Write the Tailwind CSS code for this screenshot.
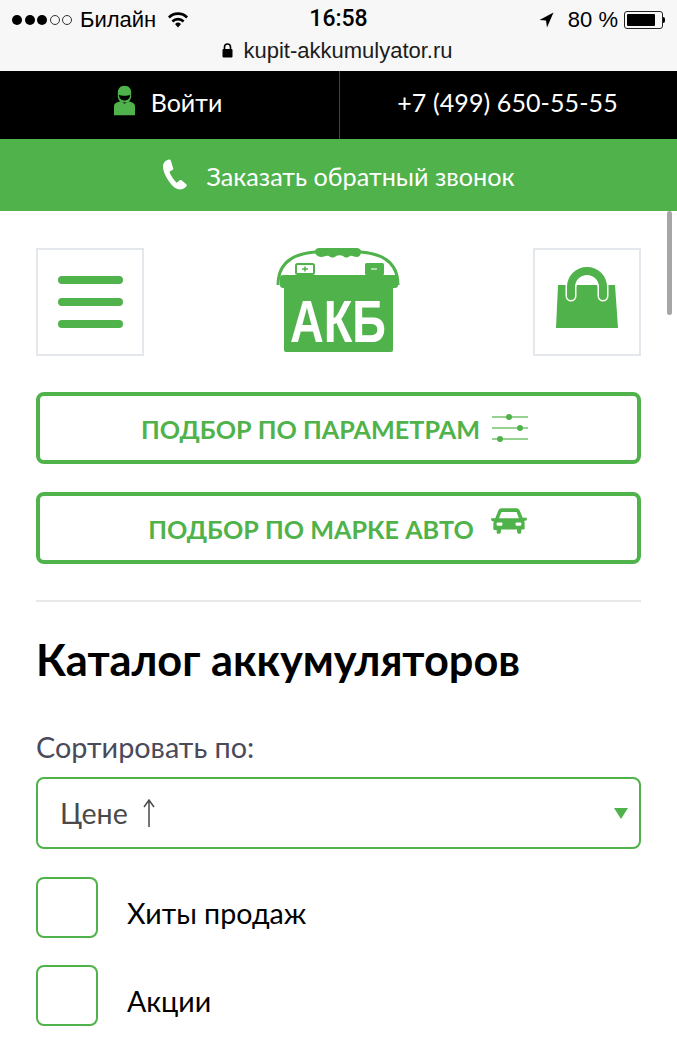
<!DOCTYPE html>
<html lang="ru">
<head>
    <meta charset="UTF-8">
    <meta name="viewport" content="width=device-width, initial-scale=1.0">
    <title>Каталог аккумуляторов</title>
    <script src="https://cdn.jsdelivr.net/npm/@tailwindcss/browser@4"></script>
</head>
<body class="relative h-[1060px] overflow-hidden bg-white font-['Lato','Noto_Sans',sans-serif]">

    <!-- статус-бар телефона -->
    <div class="h-[71px] bg-[#f7f7f7] font-['Liberation_Sans',sans-serif] text-black">
        <div class="grid h-[37px] grid-cols-3 items-center px-[12px] pt-[2px]">
            <div class="flex items-center">
                <div class="flex gap-[2.5px]">
                    <span class="size-[10px] rounded-full bg-black"></span>
                    <span class="size-[10px] rounded-full bg-black"></span>
                    <span class="size-[10px] rounded-full bg-black"></span>
                    <span class="size-[10px] rounded-full border border-[#333]"></span>
                    <span class="size-[10px] rounded-full border border-[#333]"></span>
                </div>
                <span class="ml-[8px] text-[22px]">Билайн</span>
                <svg class="ml-[11px]" width="22" height="17" viewBox="0 0 22 17"><path d="M1 5.500a14 14 0 0 1 20 0l-1.800 2a11.500 11.500 0 0 0-16.400 0zM4.500 9.500a9 9 0 0 1 13 0l-1.800 2a6.500 6.500 0 0 0-9.400 0zM8 13a4.300 4.300 0 0 1 6 0l-3 3.500z" fill="#000"/></svg>
            </div>
            <div class="text-center font-['Roboto',sans-serif] text-[23px] font-medium">16:58</div>
            <div class="flex items-center justify-end">
                <svg width="15" height="16" viewBox="0 0 15 16"><path d="M14.500 .5L.5 8l6.500.5L8 15.500z" fill="#000"/></svg>
                <span class="ml-[14px] text-[22px]">80 %</span>
                <div class="ml-[6px] flex items-center">
                    <div class="h-[18px] w-[39px] rounded-[3px] border border-[#222] p-[2px] pr-[7px]"><div class="h-full rounded-[1px] bg-black"></div></div>
                    <div class="h-[6px] w-[2px] rounded-r bg-black"></div>
                </div>
            </div>
        </div>
        <div class="flex h-[27px] items-center justify-center pr-[2px]">
            <svg class="mr-[10px]" width="11" height="15" viewBox="0 0 11 15"><path d="M2.500 6V4a3 3 0 0 1 6 0v2" fill="none" stroke="#000" stroke-width="1.600"/><rect x="0.500" y="6" width="10" height="8.500" rx="1" fill="#000"/></svg>
            <span class="text-[22px] text-[#1c1c1c]">kupit-akkumulyator.ru</span>
        </div>
    </div>

    <!-- вход и телефон -->
    <div class="flex h-[68px] bg-black text-[25px] text-white">
        <a class="flex w-[340px] items-center justify-center border-r border-[#444] pb-[4px] pr-[3px]">
            <svg class="mb-[5px] mr-[16px]" width="21" height="31" viewBox="0 0 22 31"><path d="M11 0c4.500 0 7 3 7 7v4c0 3-2 5.500-3.500 6.500h-7C6 16.500 4 14 4 11V7c0-4 2.500-7 7-7z" fill="#50b24a"/><path d="M5 9.500c3 1.500 9 1.500 12 0-.3 4-2.800 6-6 6s-5.700-2-6-6z" fill="#000"/><path d="M2 18c2-1 4-1.500 5.500-1.500L11 19l3.500-2.500c1.500 0 3.500.5 5.500 1.500 1.500 1 2 2 2 4v9H0v-9c0-2 .5-3 2-4z" fill="#50b24a"/></svg>
            <span>Войти</span>
        </a>
        <a class="flex flex-1 items-center justify-center pb-[4px] pr-[2px] tracking-[0.1px]">+7 (499) 650-55-55</a>
    </div>

    <!-- обратный звонок -->
    <a class="flex h-[72px] items-center justify-center bg-[#50b24a] pt-[4px] text-[25.200px] text-white">
        <svg class="mb-[6px] mr-[18px]" width="26" height="33" viewBox="0 0 27 33"><path d="M5.500 1.500C3 2.800 1 5 1 8c0 5 3 11 6.500 16s7 8 12 8c2 0 4.500-1.500 6-3.500.5-.7.3-1.500-.3-2l-5-4c-.7-.5-1.400-.4-2 .1l-2 1.900c-.5.4-1.100.4-1.600 0-2-1.800-5.600-7-6.600-10-.2-.6 0-1.100.5-1.400l2.300-1.300c.7-.4 1-1.100.8-1.900L9.300 2.500c-.3-1-1-1.500-1.800-1.500-.7 0-1.400.2-2 .5z" fill="#fff"/></svg>
        <span>Заказать обратный звонок</span>
    </a>

    <!-- шапка: меню, логотип, корзина -->
    <div class="flex items-center justify-between px-[36px] pt-[37px]">
        <button class="flex size-[108px] flex-col items-center justify-center gap-[14px] border-2 border-[#e4e7ec]">
            <span class="h-[8px] w-[65px] rounded-full bg-[#50b24a]"></span>
            <span class="h-[8px] w-[65px] rounded-full bg-[#50b24a]"></span>
            <span class="h-[8px] w-[65px] rounded-full bg-[#50b24a]"></span>
        </button>
        <svg class="mr-[2px] overflow-visible" width="126" height="108" viewBox="0 0 126 108">
            <path d="M3 37C3 18 14 6 40 4H86C112 6 123 18 123 37" fill="none" stroke="#50b24a" stroke-width="3"/>
            <path d="M40 4c0-3 2-4 4-4h38c2 0 4 1 4 4 0 3-2 5-4 5-3 0-5-2-7-1-3 2-5 2-7 0-2-1-5-1-7 0-2 2-5 2-7 0-3-1-5 1-8 1-2 0-6-2-6-5z" fill="#50b24a"/>
            <rect x="21" y="16" width="18" height="10" rx="1.500" fill="#fff" stroke="#50b24a" stroke-width="2"/>
            <rect x="90" y="15" width="19" height="12" rx="1.500" fill="#50b24a"/>
            <path d="M27 21h6M30 18.500v5" stroke="#50b24a" stroke-width="1.500"/>
            <path d="M96 21h6" stroke="#cfe9cd" stroke-width="1.500"/>
            <rect x="5" y="27" width="118" height="13" rx="3" fill="#50b24a"/>
            <rect x="9" y="38" width="109" height="66" rx="2" fill="#50b24a"/>
            <text x="63" y="94" text-anchor="middle" fill="#fff" font-family="Liberation Sans, sans-serif" font-weight="700" font-size="60" textLength="96" lengthAdjust="spacingAndGlyphs">АКБ</text>
        </svg>
        <a class="flex size-[108px] items-center justify-center border-2 border-[#e4e7ec]">
            <svg class="mb-[9px]" width="62" height="61" viewBox="0 0 62 61">
                <path d="M2 18H59L62 61H0Z" fill="#50b24a"/>
                <path d="M15 29V20A16 16 0 0 1 47 20V29" fill="none" stroke="#fff" stroke-width="11" stroke-linecap="round"/>
                <path d="M15 29V20A16 16 0 0 1 47 20V29" fill="none" stroke="#50b24a" stroke-width="8" stroke-linecap="round"/>
            </svg>
        </a>
    </div>

    <!-- кнопки подбора -->
    <div class="mx-[36px] mt-[36px] flex flex-col gap-[28px]">
        <a class="flex h-[72px] items-center justify-center rounded-[8px] border-4 border-[#50b24a] pr-[7px] pt-[4px] text-[25.200px] font-bold text-[#50b24a]">
            <span>ПОДБОР ПО ПАРАМЕТРАМ</span>
            <svg class="mb-[4px] ml-[11px]" width="38" height="30" viewBox="0 0 38 30">
                <path d="M1 4h36M1 15h36M1 26h36" stroke="#50b24a" stroke-opacity="0.8" stroke-width="1.500"/>
                <circle cx="18" cy="4" r="3" fill="#50b24a"/><circle cx="29" cy="15" r="3" fill="#50b24a"/><circle cx="9" cy="26" r="3" fill="#50b24a"/>
            </svg>
        </a>
        <a class="flex h-[72px] items-center justify-center rounded-[8px] border-4 border-[#50b24a] pr-[2px] pt-[3px] text-[25.200px] font-bold text-[#50b24a]">
            <span>ПОДБОР ПО МАРКЕ АВТО</span>
            <svg class="mb-[18px] ml-[17px]" width="36" height="26" viewBox="0 0 38 27">
                <path d="M8 2c.5-1 1.500-2 3-2h16c1.500 0 2.500 1 3 2l3.500 8H37c.5 0 1 .5 1 1s-.5 2-1 2l-2 .5c.5 1 .5 2 .5 3v5c0 .5-.5 1-1 1H32v2c0 1.500-.5 2.500-2 2.500s-2.500-1-2.500-2.500v-2h-17v2c0 1.500-1 2.500-2.500 2.500S6 26.500 6 25v-2H3.500c-.5 0-1-.5-1-1v-5c0-1 0-2 .5-3l-2-.5c-.5 0-1-1.500-1-2s.5-1 1-1h3.500z" fill="#50b24a"/>
                <path d="M11 4h16l2.500 6.500H8.500z" fill="#fff"/>
                <rect x="6" y="15" width="6" height="3.500" rx="1" fill="#fff"/><rect x="26" y="15" width="6" height="3.500" rx="1" fill="#fff"/>
            </svg>
        </a>
    </div>

    <hr class="mx-[36px] mt-[36px] border-t-2 border-[#e8e8e8]">

    <!-- каталог -->
    <div class="px-[36px]">
        <h1 class="mt-[27px] text-[43.300px] font-bold leading-[60px] text-black">Каталог аккумуляторов</h1>
        <div class="mt-[40px] text-[28.800px] leading-[36px] text-[#4a4a5a]">Сортировать по:</div>
        <div class="relative mt-[12px] flex h-[72px] items-center rounded-[8px] border-2 border-[#50b24a] pl-[22px] text-[28.600px] text-[#4a4a4a]">
            <span>Цене</span>
            <svg class="ml-[14px]" width="14" height="30" viewBox="0 0 14 30"><path d="M7 29V2M2 9L7 2l5 7" fill="none" stroke="#4a4a4a" stroke-width="1.500"/></svg>
            <span class="absolute right-[11px] top-[29px] h-0 w-0 border-x-[7px] border-t-[11px] border-x-transparent border-t-[#50b24a]"></span>
        </div>
        <label class="mt-[28px] flex items-center text-[28.600px] text-black">
            <span class="h-[61px] w-[62px] rounded-[8px] border-2 border-[#50b24a]"></span>
            <span class="ml-[29px] mt-[12px]">Хиты продаж</span>
        </label>
        <label class="mt-[27px] flex items-center text-[28.600px] text-black">
            <span class="h-[61px] w-[62px] rounded-[8px] border-2 border-[#50b24a]"></span>
            <span class="ml-[29px] mt-[12px]">Акции</span>
        </label>
    </div>

    <!-- полоса прокрутки поверх страницы -->
    <div class="absolute left-[667px] top-[211px] h-[104px] w-[5px] rounded-full bg-[#a6a6a6]"></div>
</body>
</html>
